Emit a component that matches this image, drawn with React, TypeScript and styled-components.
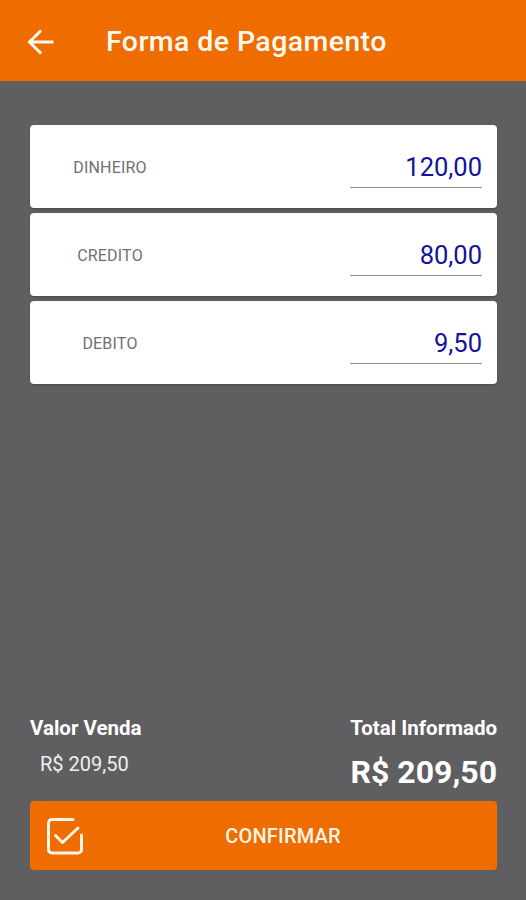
import styled, { createGlobalStyle } from "styled-components";

const GlobalStyle = createGlobalStyle`
  html, body {
    margin: 0;
    padding: 0;
    background: #5f5f61;
    font-family: Roboto, "Noto Sans", Arial, sans-serif;
  }
`;

const Screen = styled.div`
  min-height: 900px;
  display: flex;
  flex-direction: column;
  background: #5f5f61;
`;

const Header = styled.header`
  height: 81px;
  background: #ef6c00;
  display: flex;
  align-items: center;
  padding-left: 22px;
  box-sizing: border-box;
`;

const BackButton = styled.button`
  border: none;
  background: transparent;
  padding: 0;
  width: 36px;
  height: 36px;
  display: flex;
  align-items: center;
  justify-content: center;
  margin-right: 48px;
  margin-top: 2px;
  cursor: pointer;
`;

const Title = styled.h1`
  margin: 2px 0 0 0;
  color: #fffaf0;
  font-size: 28.5px;
  font-weight: 500;
  letter-spacing: 0.4px;
  line-height: 32px;
`;

const Content = styled.main`
  flex: 1;
  display: flex;
  flex-direction: column;
  padding: 44px 29px 30px 30px;
`;

const PaymentList = styled.div`
  display: flex;
  flex-direction: column;
  gap: 5px;
`;

const Card = styled.div`
  height: 83px;
  background: #ffffff;
  border-radius: 4px;
  display: flex;
  align-items: center;
  padding-right: 15px;
  box-shadow: 0 1px 2px rgba(0, 0, 0, 0.25);
`;

const MethodLabel = styled.span`
  width: 160px;
  text-align: center;
  font-size: 16px;
  color: #707070;
  letter-spacing: 0.2px;
  margin-top: 1px;
`;

const AmountField = styled.div`
  margin-left: auto;
  width: 132px;
  text-align: right;
  font-size: 25.5px;
  color: #12129c;
  line-height: 30px;
  padding-bottom: 5px;
  border-bottom: 1.5px solid #8c8c8c;
  margin-top: 6px;
`;

const Spacer = styled.div`
  flex: 1;
`;

const Summary = styled.div`
  display: flex;
  justify-content: space-between;
  align-items: flex-start;
  margin-bottom: 12px;
`;

const SummaryColumn = styled.div<{ $align: "left" | "right" }>`
  display: flex;
  flex-direction: column;
  align-items: ${(p) => (p.$align === "left" ? "flex-start" : "flex-end")};
`;

const SummaryTitle = styled.span`
  color: #ffffff;
  font-size: 20.5px;
  font-weight: 700;
  line-height: 24px;
`;

const SmallValue = styled.span`
  color: #f0f0f0;
  font-size: 20px;
  line-height: 22px;
  margin: 13px 0 0 10px;
`;

const BigValue = styled.span`
  color: #ffffff;
  font-size: 32px;
  font-weight: 700;
  line-height: 34px;
  margin-top: 15px;
`;

const ConfirmButton = styled.button`
  height: 69px;
  width: 100%;
  border: none;
  border-radius: 4px;
  background: #ef6c00;
  display: flex;
  align-items: center;
  padding: 0 16px 0 15px;
  cursor: pointer;
  font-family: inherit;
`;

const ConfirmText = styled.span`
  flex: 1;
  text-align: center;
  color: #fff6e8;
  font-size: 20px;
  font-weight: 500;
  letter-spacing: 0.2px;
`;

const payments = [
  { label: "DINHEIRO", value: "120,00" },
  { label: "CREDITO", value: "80,00" },
  { label: "DEBITO", value: "9,50" },
];

function ArrowBack() {
  return (
    <svg width="36" height="36" viewBox="0 0 36 36" fill="none">
      <path
        d="M30 18H8M18 7.5L7.5 18 18 28.5"
        stroke="#fffaf0"
        strokeWidth="3"
        strokeLinecap="square"
      />
    </svg>
  );
}

function CheckBoxIcon() {
  return (
    <svg width="40" height="40" viewBox="0 0 40 40" fill="none">
      <path
        d="M28 3.5H7a3.5 3.5 0 0 0-3.5 3.5v26.5a3.5 3.5 0 0 0 3.5 3.5h26a3.5 3.5 0 0 0 3.5-3.5V19"
        stroke="#fff6e8"
        strokeWidth="3"
        strokeLinecap="round"
        strokeLinejoin="round"
      />
      <path
        d="M10.5 19.5L17.5 26.5 33 12"
        stroke="#fff6e8"
        strokeWidth="3"
        strokeLinecap="round"
        strokeLinejoin="round"
      />
    </svg>
  );
}

export default function App() {
  return (
    <>
      <GlobalStyle />
      <Screen>
        <Header>
          <BackButton aria-label="Voltar">
            <ArrowBack />
          </BackButton>
          <Title>Forma de Pagamento</Title>
        </Header>
        <Content>
          <PaymentList>
            {payments.map((p) => (
              <Card key={p.label}>
                <MethodLabel>{p.label}</MethodLabel>
                <AmountField>{p.value}</AmountField>
              </Card>
            ))}
          </PaymentList>
          <Spacer />
          <Summary>
            <SummaryColumn $align="left">
              <SummaryTitle>Valor Venda</SummaryTitle>
              <SmallValue>R$ 209,50</SmallValue>
            </SummaryColumn>
            <SummaryColumn $align="right">
              <SummaryTitle>Total Informado</SummaryTitle>
              <BigValue>R$ 209,50</BigValue>
            </SummaryColumn>
          </Summary>
          <ConfirmButton>
            <CheckBoxIcon />
            <ConfirmText>CONFIRMAR</ConfirmText>
          </ConfirmButton>
        </Content>
      </Screen>
    </>
  );
}
